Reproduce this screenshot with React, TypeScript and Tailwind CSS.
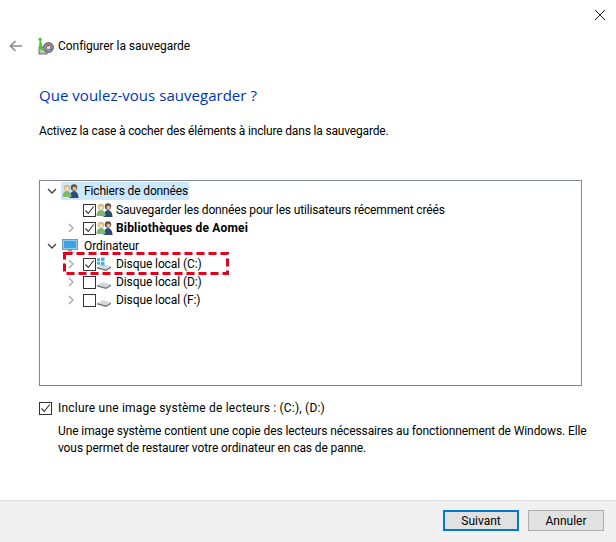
const font = "font-['Roboto','Noto_Sans',sans-serif]";

function Chevron({ open, faint }: { open?: boolean; faint?: boolean }) {
  return (
    <svg width="10" height="10" viewBox="0 0 10 10" fill="none" stroke={faint ? "#a6a6a6" : "#404040"} strokeWidth="1.3">
      {open ? <path d="M1 3l4 4 4-4" /> : <path d="M3 1l4 4-4 4" />}
    </svg>
  );
}

function Check({ checked }: { checked?: boolean }) {
  return (
    <span className="w-[13px] h-[13px] border border-[#333] bg-white flex items-center justify-center shrink-0">
      {checked && (
        <svg width="11" height="11" viewBox="0 0 11 11" fill="none" stroke="#333" strokeWidth="1.1">
          <path d="M1.5 5.5l2.8 3 5.4-7" />
        </svg>
      )}
    </span>
  );
}

function Users() {
  return (
    <svg width="17" height="16" viewBox="0 0 17 16" className="shrink-0">
      <circle cx="12" cy="4.500" r="3.200" fill="#5f4c40" />
      <circle cx="12.500" cy="5.500" r="2" fill="#d9b596" />
      <path d="M7.500 15c0-4 2-7 4.500-7s4.500 3 4.500 7z" fill="#2c4a78" />
      <circle cx="5" cy="5" r="3.300" fill="#d8bd83" />
      <circle cx="5" cy="6" r="2.100" fill="#f1dcc0" />
      <path d="M0.500 14c0-4 2-6 4.500-6s4.500 2 4.500 6z" fill="#7fb86c" />
    </svg>
  );
}

function Monitor() {
  return (
    <svg width="16" height="15" viewBox="0 0 16 15" className="shrink-0">
      <rect x="0.500" y="0.500" width="15" height="10" fill="#8ccdf5" stroke="#7d93a8" />
      <rect x="2" y="2" width="12" height="7" fill="#3fa2e6" />
      <rect x="6" y="11" width="4" height="1.500" fill="#8b98a4" />
      <rect x="3.500" y="12.500" width="9" height="1.500" fill="#aab5bf" />
    </svg>
  );
}

function Drive({ windows }: { windows?: boolean }) {
  return (
    <svg width="16" height="16" viewBox="0 0 16 16" className="shrink-0">
      <path d="M1 11l6-3 8 2.500-5 3z" fill="#d5d8da" />
      <path d="M1 11l9 2.500 5-3v1.500l-5 3-9-2.500z" fill="#6f7478" />
      {windows && (
        <g fill="#45b4ee">
          <path d="M1 2.500l3-.5v3H1z" />
          <path d="M5 1.800l3.500-.6v3.800H5z" />
          <path d="M1 6h3v3l-3-.4z" />
          <path d="M5 6h3.500v3.800L5 9.200z" />
        </g>
      )}
    </svg>
  );
}

function BackupIcon() {
  return (
    <svg width="17" height="18" viewBox="0 0 17 18">
      <rect x="2" y="10" width="8" height="7" fill="#c4bfae" stroke="#5f5b50" strokeWidth="0.8" />
      <circle cx="11.500" cy="10.500" r="5" fill="#8d8f96" stroke="#4d4e54" strokeWidth="0.8" />
      <circle cx="11.500" cy="10.500" r="1.500" fill="#eeeef2" />
      <path d="M9 9.500l2.500-3 1 2.500z" fill="#c2474d" />
      <path d="M12.500 12.500l1.500-1.500 1 2.500z" fill="#5b78c9" />
      <path d="M1 3l2-3 2.500 3-1.500.5 1.500 6.500 2.500 2-4 1-2-3 .5-6.500z" fill="#46c92a" />
    </svg>
  );
}

// one line of the tree, fixed at 18px like the Win32 list
function Row({ indent, chevron, children, className = "" }: { indent: string; chevron?: "open" | "closed"; children: React.ReactNode; className?: string }) {
  return (
    <div className={`flex items-center h-[18px] ${indent} ${className}`}>
      <span className={`${chevron === "open" ? "w-[14px]" : "w-[18px] pl-[1px]"} shrink-0 flex justify-start`}>
        {chevron === "open" && <Chevron open />}
        {chevron === "closed" && <Chevron faint />}
      </span>
      {children}
    </div>
  );
}

export default function App() {
  return (
    <div className={`${font} w-[616px] h-[542px] bg-white flex flex-col text-[12px] tracking-[-0.1px] text-black overflow-hidden`}>
      <div className="h-[28px] flex justify-end items-center pr-[10px] pt-[1px]">
        <svg width="10" height="10" viewBox="0 0 10 10" stroke="#222" strokeWidth="1" className="mr-[1px]">
          <path d="M0 0l10 10M10 0L0 10" />
        </svg>
      </div>

      <div className="h-[36px] flex items-center pl-[9px]">
        <svg width="13" height="12" viewBox="0 0 13 12" fill="none" stroke="#8a8a8a" strokeWidth="1.6">
          <path d="M13 6H1.500M6.500 1l-5 5 5 5" />
        </svg>
        <span className="ml-[15px]"><BackupIcon /></span>
        <span className="ml-[4px] tracking-[-0.05px]">Configurer la sauvegarde</span>
      </div>

      <div className="pl-[39px] pt-[19px]">
        <h1 className="font-['Open_Sans',sans-serif] text-[15px] tracking-[0.03px] leading-[24px] text-[#0033bc] font-normal">Que voulez-vous sauvegarder ?</h1>
        <p className="mt-[15px] leading-[18px] tracking-[-0.17px]">Activez la case à cocher des éléments à inclure dans la sauvegarde.</p>
      </div>

      <div className="mx-[39px] w-[543px] h-[206px] mt-[40px] border border-[#82878f] pt-[1px] pl-[7px] shrink-0">
        <Row indent="mb-[1px]" chevron="open">
          <span className="flex items-center h-[18px] bg-[#cce8ff] pl-[1px] pr-[1px]">
            <Users />
            <span className="ml-[5px] tracking-[-0.15px]">Fichiers de données</span>
          </span>
        </Row>
        <Row indent="pl-[18px]">
          <Check checked />
          <Users />
          <span className="ml-[3px] tracking-[-0.15px]">Sauvegarder les données pour les utilisateurs récemment créés</span>
        </Row>
        <Row indent="pl-[18px]" chevron="closed">
          <Check checked />
          <Users />
          <span className="ml-[3px] font-bold tracking-[0.18px]">Bibliothèques de Aomei</span>
        </Row>
        <Row indent="" chevron="open">
          <span className="ml-[1px]"><Monitor /></span>
          <span className="ml-[6px]">Ordinateur</span>
        </Row>
        <Row indent="pl-[18px]" chevron="closed" className="relative">
          <Check checked />
          <Drive windows />
          <span className="ml-[4px]">Disque local (C:)</span>
          <svg width="166" height="23" className="absolute left-[16px] top-[-3px]" fill="none" stroke="#e3001b" strokeWidth="3" strokeDasharray="8 4">
            <rect x="1.500" y="1.500" width="163" height="20" />
          </svg>
        </Row>
        <Row indent="pl-[18px]" chevron="closed">
          <Check />
          <Drive />
          <span className="ml-[4px]">Disque local (D:)</span>
        </Row>
        <Row indent="pl-[18px]" chevron="closed">
          <Check />
          <Drive />
          <span className="ml-[4px]">Disque local (F:)</span>
        </Row>
      </div>

      <div className="pl-[39px] mt-[13px] flex items-center h-[18px]">
        <Check checked />
        <span className="ml-[6px] tracking-[0.2px]">Inclure une image système de lecteurs : (C:), (D:)</span>
      </div>

      <p className="ml-[58px] mt-[6px] w-[540px] leading-[17px]">
        Une image système contient une copie des lecteurs nécessaires au fonctionnement de Windows. Elle<br />
        vous permet de restaurer votre ordinateur en cas de panne.
      </p>

      <div className="mt-auto h-[42px] bg-[#f0f0f0] border-t border-[#dfdfdf] flex items-start justify-end gap-[9px] pt-[9px] pr-[12px] tracking-normal">
        <button className="w-[76px] h-[21px] bg-[#e1e1e1] border-2 border-[#0078d7] flex items-center justify-center leading-none">Suivant</button>
        <button className="w-[76px] h-[21px] bg-[#e1e1e1] border border-[#adadad] flex items-center justify-center leading-none">Annuler</button>
      </div>
    </div>
  );
}
